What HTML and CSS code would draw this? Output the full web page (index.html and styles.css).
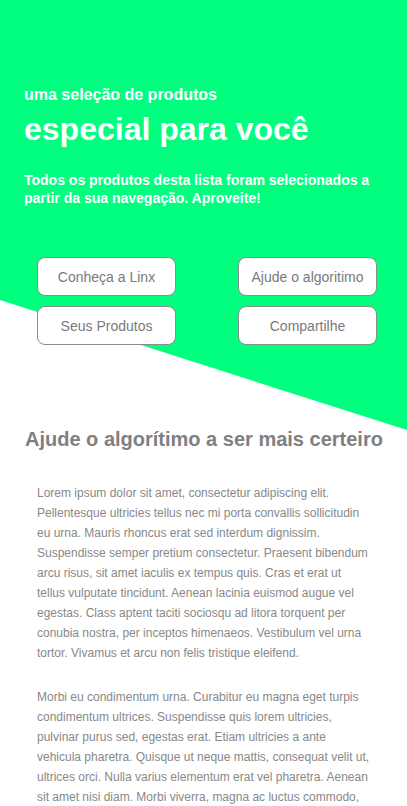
FILE: index.html
```html
<!DOCTYPE html>
<html lang="pt-BR">
  <head>
    <meta charset="utf-8">
    <title>Produtos para você</title>
    <link rel="stylesheet" href="styles.css">
  </head>
  <body>
    <header class="hero">
      <h2 class="hero-sub">uma seleção de produtos</h2>
      <h1 class="hero-title">especial para você</h1>
      <p class="hero-text">Todos os produtos desta lista foram selecionados a partir da sua navegação. Aproveite!</p>

      <nav class="actions">
        <a href="#" class="btn">Conheça a Linx</a>
        <a href="#" class="btn">Ajude o algoritimo</a>
        <a href="#" class="btn">Seus Produtos</a>
        <a href="#" class="btn">Compartilhe</a>
      </nav>
    </header>

    <section class="content">
      <h2 class="content-title">Ajude o algorítimo a ser mais certeiro</h2>
      <p class="content-text">Lorem ipsum dolor sit amet, consectetur adipiscing elit. Pellentesque ultricies tellus nec mi porta convallis sollicitudin eu urna. Mauris rhoncus erat sed interdum dignissim. Suspendisse semper pretium consectetur. Praesent bibendum arcu risus, sit amet iaculis ex tempus quis. Cras et erat ut tellus vulputate tincidunt. Aenean lacinia euismod augue vel egestas. Class aptent taciti sociosqu ad litora torquent per conubia nostra, per inceptos himenaeos. Vestibulum vel urna tortor. Vivamus et arcu non felis tristique eleifend.</p>
      <p class="content-text">Morbi eu condimentum urna. Curabitur eu magna eget turpis condimentum ultrices. Suspendisse quis lorem ultricies, pulvinar purus sed, egestas erat. Etiam ultricies a ante vehicula pharetra. Quisque ut neque mattis, consequat velit ut, ultrices orci. Nulla varius elementum erat vel pharetra. Aenean sit amet nisi diam. Morbi viverra, magna ac luctus commodo, nibh nisl posuere augue, sed feugiat lorem nisl vel lorem.</p>
    </section>
  </body>
</html>
```

FILE: styles.css
```css
body {
  margin: 0;
  font-family: "Liberation Sans", Arial, sans-serif;
  background-color: #fff;
}

/* topo verde com corte diagonal */

.hero {
  position: relative;
  height: 430px;
  padding: 85px 24px 0;
  box-sizing: border-box;
  color: #fff;
}

.hero::before {
  content: "";
  position: absolute;
  inset: 0;
  background-color: #00ff7f;
  clip-path: polygon(0 0, 100% 0, 100% 430px, 0 300px);
  z-index: -1;
}

.hero-sub {
  margin: 0;
  font-size: 16px;
  line-height: 20px;
}

.hero-title {
  margin: 5px 0 0;
  font-size: 32px;
  line-height: 38px;
}

.hero-text {
  margin: 23px 0 0;
  font-size: 14px;
  font-weight: bold;
  line-height: 18px;
}

.actions {
  display: grid;
  grid-template-columns: 139px 139px;
  justify-content: space-between;
  row-gap: 10px;
  margin: 50px 6px 0 13px;
}

.btn {
  display: flex;
  align-items: center;
  justify-content: center;
  height: 39px;
  box-sizing: border-box;
  border: 1px solid #8c8c8c;
  border-radius: 8px;
  background-color: #fff;
  color: #7a7a7a;
  font-size: 14px;
  text-decoration: none;
}

/* texto */

.content {
  padding: 0 37px 40px;
}

.content-title {
  margin: -3px -30px 0 -12px;
  color: #808080;
  font-size: 20px;
  line-height: 24px;
  white-space: nowrap;
}

.content-text {
  margin: 32px 0 0;
  color: #888;
  font-size: 12px;
  line-height: 20px;
}

.content-text + .content-text {
  margin-top: 24px;
}
```
